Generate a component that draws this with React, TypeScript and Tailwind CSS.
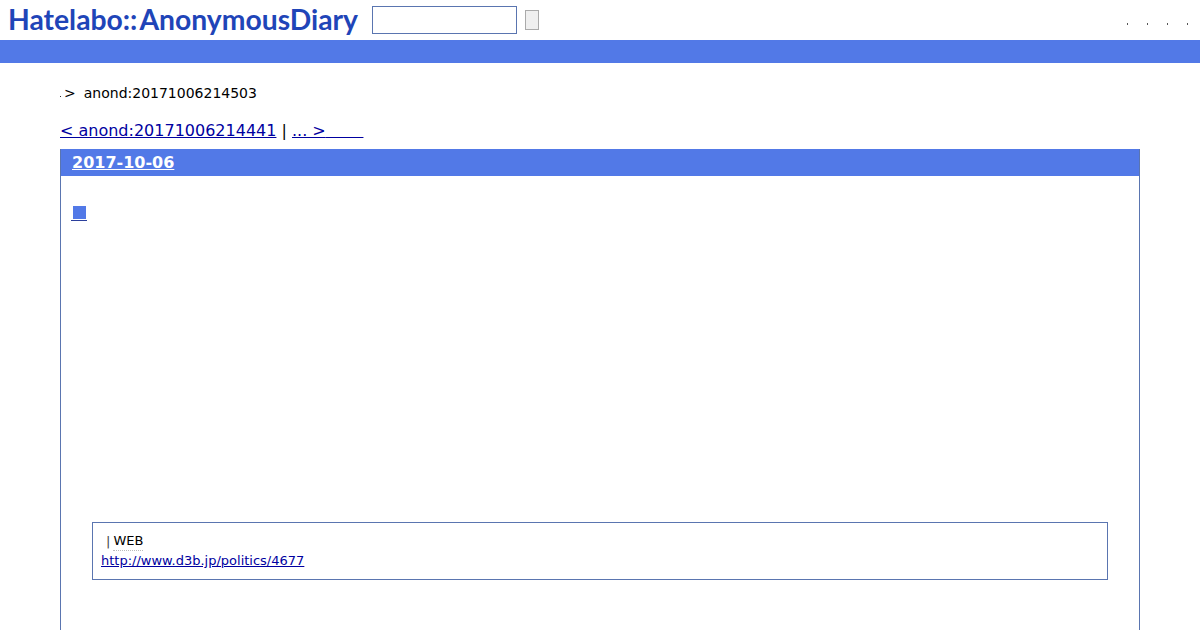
const BLUE = 'bg-[#5279e7]'

function TinyDot() {
  return <span className="block h-[2px] w-px bg-[#555]" />
}

function Header() {
  return (
    <header className="flex h-10 items-center bg-white">
      <div className="mb-[2px] ml-[8px] flex w-[364px] font-['Lato',sans-serif] text-[28.3px] leading-none font-bold whitespace-nowrap text-[#1f45b8]">
        <span>Hatelabo::</span>
        <span className="ml-[2px]">AnonymousDiary</span>
      </div>
      <input
        aria-label="search"
        className="h-7 w-[145px] border border-[#5a75b0] bg-white"
      />
      <button
        aria-label="submit"
        className="ml-2 h-5 w-[14px] border border-[#aaa] bg-[#efefef]"
      />
      <nav className="mt-[8px] mr-[12px] ml-auto flex gap-[19px] pl-px">
        <TinyDot />
        <TinyDot />
        <TinyDot />
        <TinyDot />
      </nav>
    </header>
  )
}

export default function App() {
  return (
    <div className="h-[630px] overflow-hidden bg-white font-['DejaVu_Sans',sans-serif] text-black">
      <Header />
      <div className={`h-[23px] ${BLUE}`} />

      <main className="px-[60px]">
        <div className="mt-[21px] flex h-[18px] items-center text-[14px] leading-[18px]">
          <span className="mt-[6px] h-px w-px bg-[#333]" />
          <span className="ml-[3px]">&gt;</span>
          <span className="ml-[8px]">anond:20171006214503</span>
        </div>

        <div className="mt-[18px] h-[29px] text-[16px] leading-[22px] whitespace-pre">
          <a href="#" className="text-[#0000a0] underline">
            &lt; anond:20171006214441
          </a>
          <span> | </span>
          <a href="#" className="text-[#0000a0] underline">
            {'... >'}
            <span className="tracking-[0.3px]">{'       '}</span>
          </a>
        </div>

        <section className="h-[500px] border border-t-0 border-[#5a75b0]">
          <h2 className={`flex h-[27px] items-center px-[11px] text-[16px] font-bold text-white ${BLUE}`}>
            <a href="#" className="underline">
              2017-10-06
            </a>
          </h2>

          <div className="mt-[27px] ml-[10px] flex h-[18px] w-[16px] flex-col items-center border-b border-[#2b3f9c]">
            <span className={`mt-[3px] h-[13px] w-[13px] ${BLUE}`} />
          </div>

          <div className="mx-[31px] mt-[301px] h-[58px] border border-[#5a75b0] px-2 pt-[9px] text-[13px] leading-[20px]">
            <div className="flex items-start">
              <span className="ml-[5px] text-[#444]">|</span>
              <span className="ml-[3px] border-b border-dotted border-[#bbb] leading-[18px]">WEB</span>
            </div>
            <a href="#" className="-mt-px block text-[#0000a0] underline">
              http://www.d3b.jp/politics/4677
            </a>
          </div>
        </section>
      </main>
    </div>
  )
}
